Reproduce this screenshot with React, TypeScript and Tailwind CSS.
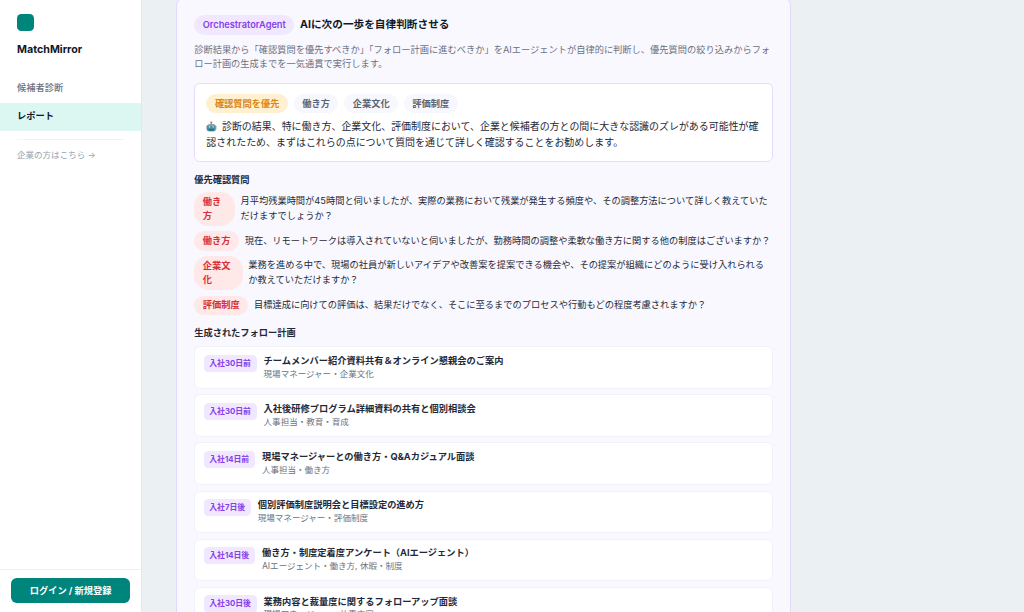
import type { ReactNode } from "react";

const questions = [
  {
    tag: "働き方",
    width: "w-[40.6px]",
    text: "月平均残業時間が45時間と伺いましたが、実際の業務において残業が発生する頻度や、その調整方法について詳しく教えていただけますでしょうか？",
  },
  {
    tag: "働き方",
    width: "w-[44.8px]",
    text: "現在、リモートワークは導入されていないと伺いましたが、勤務時間の調整や柔軟な働き方に関する他の制度はございますか？",
  },
  {
    tag: "企業文化",
    width: "w-[48.4px]",
    text: "業務を進める中で、現場の社員が新しいアイデアや改善案を提案できる機会や、その提案が組織にどのように受け入れられるか教えていただけますか？",
  },
  {
    tag: "評価制度",
    width: "w-[54.1px]",
    text: "目標達成に向けての評価は、結果だけでなく、そこに至るまでのプロセスや行動もどの程度考慮されますか？",
  },
];

const plans = [
  { when: "入社30日前", title: "チームメンバー紹介資料共有＆オンライン懇親会のご案内", meta: "現場マネージャー・企業文化" },
  { when: "入社30日前", title: "入社後研修プログラム詳細資料の共有と個別相談会", meta: "人事担当・教育・育成" },
  { when: "入社14日前", title: "現場マネージャーとの働き方・Q&Aカジュアル面談", meta: "人事担当・働き方" },
  { when: "入社7日後", title: "個別評価制度説明会と目標設定の進め方", meta: "現場マネージャー・評価制度" },
  { when: "入社14日後", title: "働き方・制度定着度アンケート（AIエージェント）", meta: "AIエージェント・働き方, 休暇・制度" },
  { when: "入社30日後", title: "業務内容と裁量度に関するフォローアップ面談", meta: "現場マネージャー・仕事内容" },
];

function Chip({ className, children }: { className: string; children: ReactNode }) {
  return (
    <span className={`shrink-0 rounded-[14.2px] px-[8.53px] py-[2.84px] text-[9.24px] leading-[13.87px] font-semibold ${className}`}>
      {children}
    </span>
  );
}

function Robot() {
  return (
    <svg viewBox="0 0 20 20" className="mr-[5px] inline-block h-[10.6px] w-[10.6px] align-[-1.5px]">
      <circle cx="10" cy="2.8" r="2" fill="#d9605a" />
      <path d="M9 4h2v3H9z" fill="#78909c" />
      <rect x="0" y="9" width="3" height="7" rx="1" fill="#b0bec5" />
      <rect x="17" y="9" width="3" height="7" rx="1" fill="#b0bec5" />
      <path d="M2 9Q3 5.500 10 5.500T18 9v9q-1 2-8 2t-8-2z" fill="#428d9e" />
      <path d="M3.500 8q2-2 6.500-2t6.500 2v1h-13z" fill="#82aeb9" />
      <circle cx="6.600" cy="11" r="1.700" fill="#e5c8bd" />
      <circle cx="13.400" cy="11" r="1.700" fill="#e5c8bd" />
      <path d="M5.500 15.500h9v2h-9z" fill="#245d6b" />
    </svg>
  );
}

function Sidebar() {
  return (
    <aside className="flex w-[142.2px] shrink-0 flex-col border-r border-[#e2e8ec] bg-white">
      <div className="px-[17.07px] pt-[14.2px]">
        <div className="h-[17.07px] w-[17.07px] rounded-[4.27px] bg-[#00857c]" />
        <div className="mt-[10.2px] text-[10.67px] leading-[17px] font-bold text-[#111827]">MatchMirror</div>
      </div>
      <nav className="mt-[15.8px] text-[9.24px]">
        <div className="flex h-[28.3px] items-center px-[17.07px] font-medium text-[#6b7280]">候補者診断</div>
        <div className="flex h-[28.4px] items-center bg-[#dcf6f2] px-[17.07px] pb-[1px] font-bold text-[#111827]">レポート</div>
      </nav>
      <div className="mx-[17.07px] mt-[8.4px] border-t border-[#f1f3f5] pt-[8.3px] text-[8.53px] leading-[13px] text-[#94a3b0]">
        企業の方はこちら →
      </div>
      <div className="mt-auto border-t border-[#eef0f3] px-[11.38px] pt-[8.3px] pb-[8.7px]">
        <button className="flex h-[25px] w-full items-center justify-center rounded-[5.69px] bg-[#00857c] pb-[0.5px] text-[9.24px] font-bold text-white">
          ログイン / 新規登録
        </button>
      </div>
    </aside>
  );
}

export default function App() {
  return (
    <div
      lang="ja"
      className="flex h-[612px] w-[1024px] overflow-hidden bg-[#ebf0f3] font-['Inter','Noto_Sans_CJK_JP',sans-serif] text-[#1f2937]"
    >
      <Sidebar />
      <main className="min-w-0 flex-1 pl-[34.2px]">
        <section className="-mt-[3px] h-[640px] w-[614.4px] rounded-[8.53px] border border-[#e0d8fd] bg-[#f9f8ff] px-[16.8px] pt-[17px]">
          <div className="flex items-center gap-[5.69px]">
            <Chip className="bg-[#f1e8ff] text-[#8540ec]">OrchestratorAgent</Chip>
            <h2 className="text-[10.67px] leading-[17px] font-bold text-[#111827]">AIに次の一歩を自律判断させる</h2>
          </div>
          <p className="mt-[8px] text-[9.24px] leading-[14.8px] text-[#6b7280]">
            診断結果から「確認質問を優先すべきか」「フォロー計画に進むべきか」をAIエージェントが自律的に判断し、優先質問の絞り込みからフォロー計画の生成までを一気通貫で実行します。
          </p>

          <div className="mt-[11px] h-[78.6px] rounded-[5.69px] border border-[#e6dcfd] bg-white px-[11.2px] pt-[9.7px]">
            <div className="flex gap-[5.69px]">
              <Chip className="bg-[#fff0d2] text-[#dc870d]">確認質問を優先</Chip>
              <Chip className="bg-[#f7f8fd] text-[#5b6472]">働き方</Chip>
              <Chip className="bg-[#f7f8fd] text-[#5b6472]">企業文化</Chip>
              <Chip className="bg-[#f7f8fd] text-[#5b6472]">評価制度</Chip>
            </div>
            <p className="mt-[6px] text-[9.96px] leading-[15.9px]">
              <Robot />
              診断の結果、特に働き方、企業文化、評価制度において、企業と候補者の方との間に大きな認識のズレがある可能性が確認されたため、まずはこれらの点について質問を通じて詳しく確認することをお勧めします。
            </p>
          </div>

          <h3 className="mt-[11.7px] text-[9.24px] leading-[14px] font-bold">優先確認質問</h3>
          <div className="mt-[4.7px] flex flex-col gap-[5.69px]">
            {questions.map((q) => (
              <div key={q.text} className="flex items-center gap-[5.69px]">
                <Chip className={`bg-[#ffe8e8] text-[#d93036] ${q.width}`}>{q.tag}</Chip>
                <p className="min-w-0 flex-1 text-[9.24px] leading-[14.8px]">{q.text}</p>
              </div>
            ))}
          </div>

          <h3 className="mt-[11.1px] text-[9.24px] leading-[14px] font-bold">生成されたフォロー計画</h3>
          <div className="mt-[6.2px] flex flex-col gap-[5.7px]">
            {plans.map((p) => (
              <div
                key={p.title}
                className="flex h-[42.4px] shrink-0 items-start gap-[7.11px] rounded-[5.69px] border border-[#f1f1f8] bg-white px-[8.4px] pt-[6.8px]"
              >
                <span className="mt-[0.7px] shrink-0 rounded-[4.27px] bg-[#f1e8ff] px-[5.69px] py-[2.84px] text-[7.82px] leading-[11.7px] font-bold text-[#8540ec]">
                  {p.when}
                </span>
                <div className="min-w-0">
                  <div className="text-[9.24px] leading-[13.9px] font-bold">{p.title}</div>
                  <div className="text-[8.53px] leading-[12.8px] text-[#6b7280]">{p.meta}</div>
                </div>
              </div>
            ))}
          </div>
        </section>
      </main>
    </div>
  );
}
